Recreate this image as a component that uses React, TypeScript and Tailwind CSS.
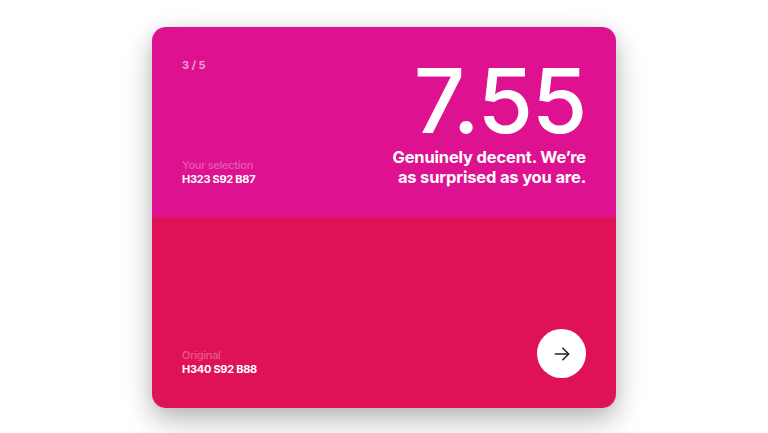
export default function App() {
    return (
        <div className="min-h-screen w-full bg-white flex justify-center pt-[27px]" style={{ fontFamily: 'Inter, "Noto Sans", sans-serif' }}>
            <div className="w-[464px] h-[381px] rounded-[14px] overflow-hidden flex flex-col shadow-[0_12px_28px_rgba(0,0,0,0.28),0_0_14px_rgba(0,0,0,0.06)]">
                {/* Selection */}
                <div className="h-[190px] bg-[#DE1290] flex justify-between px-[30px] pt-[33px] pb-[30px]">
                    <div className="flex flex-col justify-between">
                        <div className="text-[11px] font-bold text-white/60 leading-none">3 / 5</div>
                        <div className="leading-[14px] text-[11px] mb-[1px]">
                            <div className="text-white/30 font-medium tracking-tight">Your selection</div>
                            <div className="text-white font-bold tracking-tight">H323 S92 B87</div>
                        </div>
                    </div>
                    <div className="flex flex-col items-end text-right text-white mt-[5px]">
                        <div className="text-[90px] font-medium leading-[72px] tracking-[-0.015em]">7.55</div>
                        <div className="text-[16.5px] font-bold leading-[20px] tracking-[-0.01em] mt-[10px]">
                            Genuinely decent. We’re
                            <br />
                            as surprised as you are.
                        </div>
                    </div>
                </div>
                {/* Original */}
                <div className="flex-1 bg-[#E01257] flex justify-between items-end px-[30px] pb-[30px]">
                    <div className="leading-[14px] text-[11px] mb-[2px]">
                        <div className="text-white/30 font-medium tracking-tight">Original</div>
                        <div className="text-white font-bold tracking-tight">H340 S92 B88</div>
                    </div>
                    <button className="w-[49px] h-[49px] rounded-full bg-white flex items-center justify-center">
                        <svg width="20" height="20" viewBox="0 0 24 24" fill="none" stroke="#222" strokeWidth="1.8" strokeLinecap="round" strokeLinejoin="round">
                            <path d="M4 12h16" />
                            <path d="M13 5l7 7-7 7" />
                        </svg>
                    </button>
                </div>
            </div>
        </div>
    );
}
